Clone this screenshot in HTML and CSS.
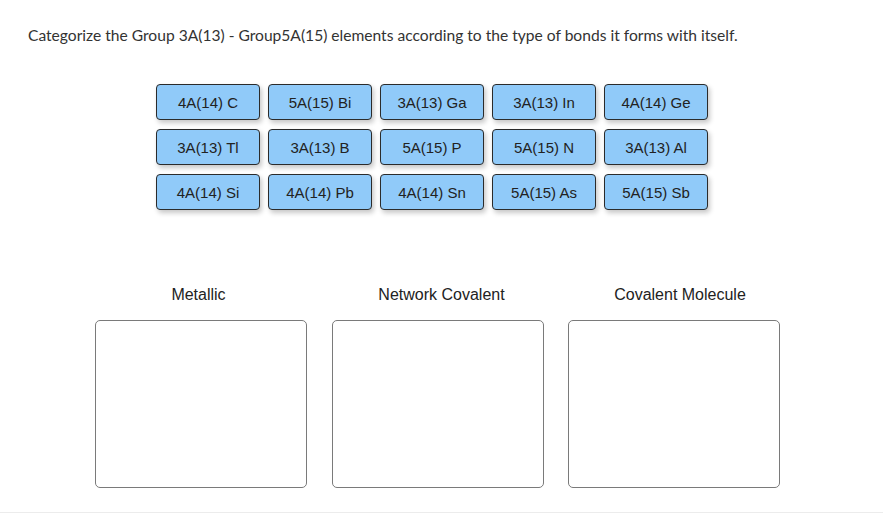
FILE: index.html
```html
<!DOCTYPE html>
<html>
<head>
<meta charset="utf-8">
<link rel="stylesheet" href="styles.css">
</head>
<body>
<div class="page">
  <p class="prompt">Categorize the Group 3A(13) - Group5A(15) elements according to the type of bonds it forms with itself.</p>
  <div class="tiles">
    <div class="tile">4A(14) C</div>
    <div class="tile">5A(15) Bi</div>
    <div class="tile">3A(13) Ga</div>
    <div class="tile">3A(13) In</div>
    <div class="tile">4A(14) Ge</div>
    <div class="tile">3A(13) Tl</div>
    <div class="tile">3A(13) B</div>
    <div class="tile">5A(15) P</div>
    <div class="tile">5A(15) N</div>
    <div class="tile">3A(13) Al</div>
    <div class="tile">4A(14) Si</div>
    <div class="tile">4A(14) Pb</div>
    <div class="tile">4A(14) Sn</div>
    <div class="tile">5A(15) As</div>
    <div class="tile">5A(15) Sb</div>
  </div>
  <div class="bins">
    <div class="bin">
      <div class="bin-label label-metallic">Metallic</div>
      <div class="bin-box"></div>
    </div>
    <div class="bin">
      <div class="bin-label label-network">Network Covalent</div>
      <div class="bin-box"></div>
    </div>
    <div class="bin">
      <div class="bin-label label-molecule">Covalent Molecule</div>
      <div class="bin-box"></div>
    </div>
  </div>
</div>
</body>
</html>
```
FILE: styles.css
```css
html, body {
  margin: 0;
  padding: 0;
  background: #fff;
}
.page {
  width: 883px;
  height: 512px;
  border-bottom: 1px solid #ececec;
  box-sizing: content-box;
}
.prompt {
  margin: 0;
  padding: 26px 0 0 28px;
  font-family: "Lato", "Open Sans", sans-serif;
  font-size: 15.6px;
  line-height: 19px;
  color: #333;
}
.tiles {
  margin: 39px 0 0 156px;
  width: 552px;
  display: grid;
  grid-template-columns: repeat(5, 104px);
  column-gap: 8px;
  row-gap: 9px;
}
.tile {
  box-sizing: border-box;
  height: 36px;
  background: #90caf9;
  border: 1px solid #2b2b2b;
  border-radius: 4px;
  box-shadow: 2px 3px 5px rgba(0, 0, 0, 0.22);
  display: flex;
  align-items: center;
  justify-content: center;
  font-family: "Liberation Sans", Arial, sans-serif;
  font-size: 15px;
  color: #222;
}
.bins {
  margin: 75px 0 0 95px;
  display: flex;
  gap: 24.5px;
}
.bin {
  width: 212px;
  display: flex;
  flex-direction: column;
  align-items: center;
}
.bin-label {
  font-family: "Liberation Sans", Arial, sans-serif;
  font-size: 16px;
  line-height: 19px;
  color: #222;
  height: 19px;
}
.label-metallic {
  margin-right: 5px;
}
.label-network {
  margin-left: 8px;
}
.label-molecule {
  margin-left: 12px;
}
.bin-box {
  margin-top: 16px;
  box-sizing: border-box;
  width: 212px;
  height: 168px;
  border: 1px solid #7a7a7a;
  border-radius: 5px;
}
```
